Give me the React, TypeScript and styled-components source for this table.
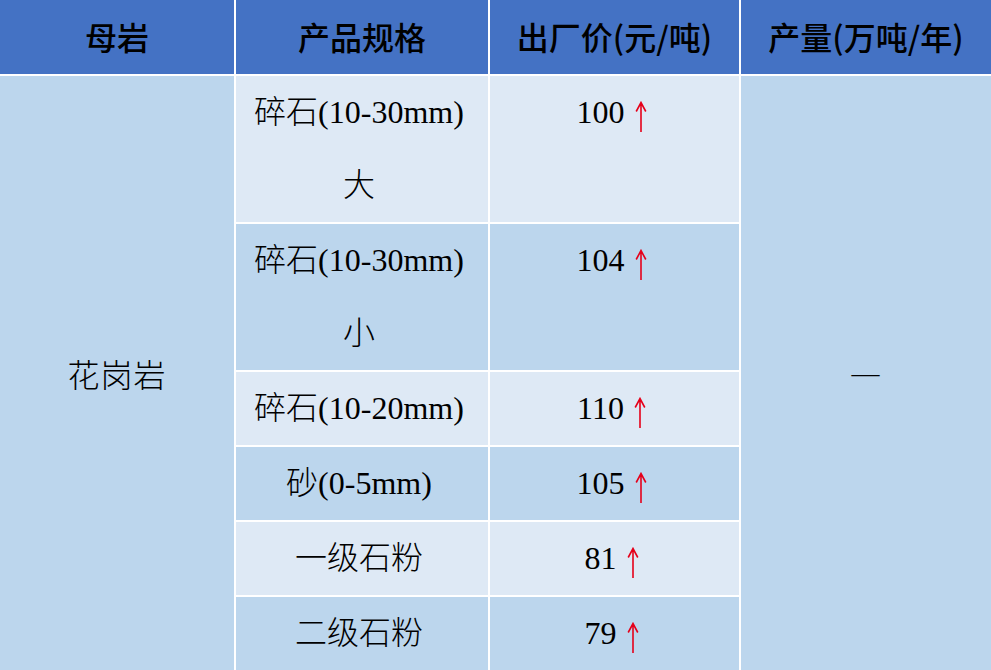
import React from "react";
import styled, { createGlobalStyle } from "styled-components";

const COLORS = {
  header: "#4472c4",
  light: "#dee9f5",
  dark: "#bcd6ed",
  border: "#ffffff",
  text: "#000000",
  arrow: "#e5001a",
};

const GlobalStyle = createGlobalStyle`
  html, body {
    margin: 0;
    padding: 0;
    background: #ffffff;
  }
`;

const Table = styled.div`
  display: grid;
  width: 991px;
  grid-template-columns: 234px 252px 249px 1fr;
  grid-template-rows: 74px 146px 146px 73px 73px 73px 73px;
  gap: 2px;
  background-color: ${COLORS.border};
  color: ${COLORS.text};
`;

const HeaderCell = styled.div`
  display: flex;
  align-items: center;
  justify-content: center;
  padding-bottom: 2px;
  background-color: ${COLORS.header};
  font-family: "Noto Sans CJK SC", "Liberation Sans", sans-serif;
  font-weight: 500;
  font-size: 32px;
`;

const SpanCell = styled.div<{ $column: number; $size?: number }>`
  grid-column: ${({ $column }) => $column};
  grid-row: 2 / span 6;
  display: flex;
  align-items: center;
  justify-content: center;
  background-color: ${COLORS.dark};
  font-family: "Liberation Serif", "Noto Sans CJK SC", serif;
  font-weight: 300;
  font-size: ${({ $size }) => $size || 32}px;
  letter-spacing: 1px;
`;

const BodyCell = styled.div<{ $shade: "light" | "dark" }>`
  display: flex;
  flex-direction: column;
  align-items: center;
  padding-right: 6px;
  background-color: ${({ $shade }) => COLORS[$shade]};
  font-family: "Liberation Serif", "Noto Sans CJK SC", serif;
  font-weight: 300;
  font-size: 32px;
  line-height: 73px;
  white-space: nowrap;
`;

const Line = styled.span`
  display: block;
`;

const ArrowIcon = styled.svg`
  width: 12px;
  height: 31px;
  margin-left: 10px;
  vertical-align: -9px;
`;

const UpArrow = () => (
  <ArrowIcon viewBox="0 0 12 31">
    <path
      d="M6 1.5 V31 M1.2 10.5 L6 1.5 L10.8 10.5"
      fill="none"
      stroke={COLORS.arrow}
      strokeWidth={1.6}
    />
  </ArrowIcon>
);

type Row = {
  spec: string[];
  price: number;
};

const rows: Row[] = [
  { spec: ["碎石(10-30mm)", "大"], price: 100 },
  { spec: ["碎石(10-30mm)", "小"], price: 104 },
  { spec: ["碎石(10-20mm)"], price: 110 },
  { spec: ["砂(0-5mm)"], price: 105 },
  { spec: ["一级石粉"], price: 81 },
  { spec: ["二级石粉"], price: 79 },
];

const headers = ["母岩", "产品规格", "出厂价(元/吨)", "产量(万吨/年)"];

const App = (): JSX.Element => {
  return (
    <>
      <GlobalStyle />
      <Table>
        {headers.map((title) => (
          <HeaderCell key={title}>{title}</HeaderCell>
        ))}
        <SpanCell $column={1}>花岗岩</SpanCell>
        {rows.map(({ spec, price }, index) => {
          const shade = index % 2 === 0 ? "light" : "dark";
          return (
            <React.Fragment key={index}>
              <BodyCell $shade={shade} style={{ gridColumn: 2 }}>
                {spec.map((text) => (
                  <Line key={text}>{text}</Line>
                ))}
              </BodyCell>
              <BodyCell $shade={shade} style={{ gridColumn: 3 }}>
                <Line>
                  {price}
                  <UpArrow />
                </Line>
              </BodyCell>
            </React.Fragment>
          );
        })}
        <SpanCell $column={4} $size={28}>
          —
        </SpanCell>
      </Table>
    </>
  );
};

export default App;
